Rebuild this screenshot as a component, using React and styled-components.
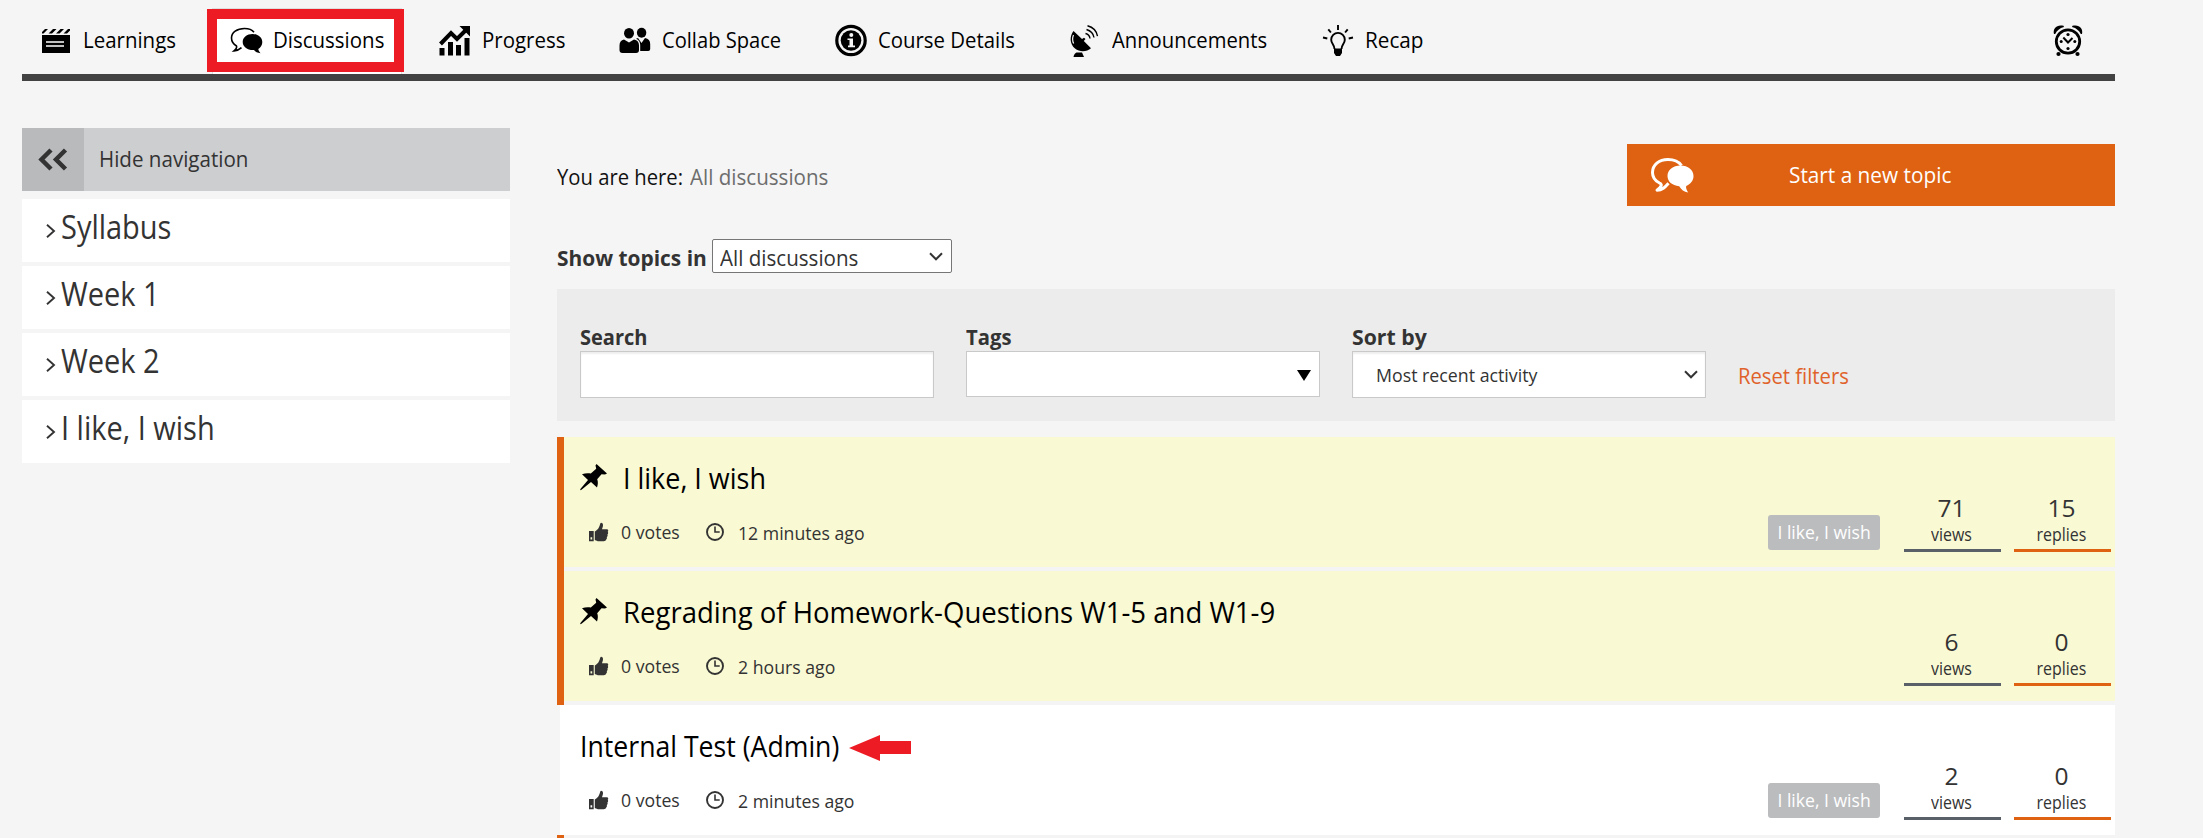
import React from "react";
import styled, { createGlobalStyle, css } from "styled-components";

const GlobalStyle = createGlobalStyle`
  *, *::before, *::after { box-sizing: border-box; }
  html, body { margin: 0; height: 838px; overflow: hidden; background: #f5f5f5; }
  body { font-family: "Open Sans", "Noto Sans", sans-serif; color: #333; }
`;

/* Slightly condensed run of text; $w reserves its drawn width in the line. */
const Narrow = styled.span`
  display: inline-block;
  flex: none;
  width: ${(p) => (p.$w ? `${p.$w}px` : "auto")};
  white-space: nowrap;
  transform: scaleX(${(p) => p.$x || 0.93});
  transform-origin: ${(p) => (p.$center ? "center" : "left")};
`;

const Page = styled.div`
  width: 2093px;
  height: 838px;
  margin-left: 22px;
`;

/* ---------- top bar ---------- */
const TopBar = styled.nav`
  display: grid;
  grid-template-columns: 190px 209px 180px 216px 234px 253px 1fr auto;
  align-items: stretch;
  height: 81px;
  padding: 8px 31px 0 18px;
  border-bottom: 7px solid #424242;
`;

const Tab = styled.a`
  position: relative;
  display: flex;
  gap: 9px;
  color: #000;
`;

const TabIcon = styled.svg`
  position: relative;
  flex: none;
  width: 34px;
  height: 34px;
  margin-top: 16px;
  overflow: visible;
`;

const TabLabel = styled(Narrow)`
  position: relative;
  font-size: 22px;
  line-height: 62px;
`;

const ActiveFill = styled.span`
  position: absolute;
  top: 0;
  left: -18px;
  width: 190px;
  height: 66px;
  background: #fff;
  border: 1px solid #dedede;
  border-bottom: 0;
`;

const Highlight = styled.span`
  position: absolute;
  top: 1px;
  left: -23px;
  width: 197px;
  height: 63px;
  border: 10px solid #ed1c24;
`;

/* ---------- columns ---------- */
const Columns = styled.div`
  display: flex;
  gap: 47px;
`;

const Sidebar = styled.aside`
  width: 488px;
  padding-top: 47px;
`;

const HideNav = styled.div`
  display: flex;
  height: 63px;
  margin-bottom: 8px;
  background: #cdced0;
  font-size: 22px;
  line-height: 61px;
`;

const HideNavIcon = styled.div`
  display: flex;
  align-items: center;
  justify-content: center;
  width: 62px;
  margin-right: 15px;
  background: #b9babc;
`;

const SideItem = styled.a`
  display: flex;
  height: 63px;
  margin-bottom: 4px;
  padding-left: 24px;
  background: #fff;
  color: #333;
  font-size: 32px;
  line-height: 56px;
  svg { margin: 25px 5px 0 0; }
`;

const Main = styled.main`
  width: 1558px;
`;

const Head = styled.div`
  display: flex;
  justify-content: space-between;
  padding-top: 63px;
  height: 158px;
`;

const Crumbs = styled.div`
  font-size: 22px;
  line-height: 65px;
  color: #111;
`;

const Current = styled(Narrow)`
  color: #6d6d6d;
`;

const NewTopic = styled.button`
  display: flex;
  gap: 94px;
  width: 488px;
  height: 62px;
  padding: 0 24px;
  border: 0;
  background: #de6212;
  color: #fff;
  font: 500 22px/60px "Open Sans", sans-serif;
  svg { flex: none; margin-top: 14px; }
`;

const Scope = styled.div`
  display: flex;
  height: 50px;
  font-size: 22px;
  line-height: 37px;
`;

const Strong = styled(Narrow)`
  font-weight: 700;
  font-size: 22px;
`;

const ScopeSelect = styled.div`
  display: flex;
  justify-content: space-between;
  width: 240px;
  height: 34px;
  padding: 0 8px 0 7px;
  border: 1px solid #767676;
  border-radius: 2px;
  background: #fff;
  line-height: 35px;
  svg { margin-top: 12px; }
`;

const Filters = styled.section`
  display: flex;
  height: 132px;
  margin-bottom: 16px;
  padding: 33px 24px 0 23px;
  background: #ececec;
`;

const Field = styled.div`
  display: flex;
  flex-direction: column;
  width: 354px;
  margin-right: 32px;
`;

const FieldLabel = styled(Strong)`
  height: 29px;
  line-height: 29px;
`;

const Control = styled.div`
  display: flex;
  justify-content: space-between;
  height: ${(p) => (p.$inset ? 47 : 46)}px;
  padding: 0 ${(p) => (p.$inset ? 7 : 8)}px 0 23px;
  border: 1px solid #c9c9c9;
  background: #fff;
  font-size: 19px;
  line-height: 46px;
  ${(p) => p.$inset && css`box-shadow: inset 0 2px 2px rgba(0, 0, 0, 0.07);`}
  svg { margin-top: 18px; }
`;

const Reset = styled(Narrow)`
  margin-top: 38px;
  font-size: 22px;
  line-height: 30px;
  color: #e0622a;
`;

/* ---------- topics ---------- */
const Topic = styled.article`
  display: flex;
  justify-content: space-between;
  height: 134px;
  border-bottom: 4px solid #f4f4f4;
  padding-left: ${(p) => (p.$pinned ? 17 : 21)}px;
  margin-left: ${(p) => (p.$pinned ? 7 : 3)}px;
  background: ${(p) => (p.$pinned ? "#f9f9d3" : "#fff")};
`;

const PinnedGroup = styled.div`
  background: linear-gradient(to right, #de6212 7px, #f4f4f4 7px);
`;

const NextEdge = styled.div`
  position: relative;
  width: 7px;
  height: 4px;
  margin-top: -4px;
  background: #de6212;
`;

const TopicTitle = styled.h3`
  display: flex;
  align-items: flex-start;
  height: 83px;
  margin: 0 0 0 -1px;
  color: #000;
  font-size: 28.5px;
  font-weight: 400;
  line-height: 83px;
`;

const PinIcon = styled.svg`
  width: 28px;
  height: 28px;
  margin: 27px 15px 0 0;
`;

const ArrowIcon = styled.svg`
  width: 62px;
  height: 26px;
  margin: 30px 0 0 12px;
`;

const Meta = styled.div`
  display: flex;
  padding-left: 8px;
  font-size: 19px;
  line-height: 24px;
`;

const Ago = styled(Narrow)`
  padding-top: 1px;
`;

const MetaIcon = styled.svg`
  width: 20px;
  height: 20px;
  margin: 2px ${(p) => p.$gap}px 0 0;
`;

const Figures = styled.div`
  display: flex;
  align-items: flex-start;
  margin-right: 4px;
`;

const Tag = styled.span`
  width: 112px;
  height: 35px;
  margin: 78px 24px 0 0;
  border-radius: 3px;
  background: #bbbcbe;
  color: #fff;
  font-size: 18.5px;
  font-weight: 500;
  line-height: 34px;
  text-align: center;
`;

const Stat = styled.div`
  width: 97px;
  height: 58px;
  padding-right: 2px;
  margin: 57px 0 0 ${(p) => (p.$accent ? 13 : 0)}px;
  border-bottom: 3px solid ${(p) => (p.$accent ? "#de6212" : "#596068")};
  font-size: 17.5px;
  line-height: 26px;
  text-align: center;
`;

const Count = styled.div`
  font-size: 24.5px;
  line-height: 27px;
`;

/* ---------- drawings ---------- */
const Icon = ({ children }) => (
  <TabIcon viewBox="0 0 34 34" aria-hidden="true">{children}</TabIcon>
);

const Clapper = () => (
  <Icon>
    <path d="M2 11h28v18H2z" />
    <path d="M2 9.500V8l3-3h3L3.500 9.500zM8.500 9.500 13 5h3.500L12 9.500zM16 9.500 20.500 5H24l-4.500 4.500zM23.500 9.500 28 5h2v1.500l-3 3z" />
    <path d="M6 18h18M6 22h18" stroke="#fff" strokeWidth="1.300" />
  </Icon>
);

const Bubbles = () => (
  <Icon>
    <path d="M24 8.300C22 5.700 18.500 4.500 14.500 4.500 7 4.500 1.500 8.500 1.500 14c0 3.700 2.200 6.300 5 8 .6 1.500-.8 3.500-2.500 4.900 3.200-.2 5.800-1.600 7.500-3.200" fill="none" stroke="#000" strokeWidth="1.600" />
    <path d="M22.500 10c5.500 0 9.800 3.500 9.800 8 0 3-1.600 5.500-4 7 .2 1.700 1.200 3.200 2.200 4.200-3-.2-5.200-1.500-6.500-3.200-6.300.4-11.300-3-11.300-8 0-4.500 4.300-8 9.800-8z" />
  </Icon>
);

const Chart = () => (
  <Icon>
    <path d="M.5 24h5v7.500h-5zM9 18h5v13.500H9zM17 21h5v10.500h-5zM25.500 14h5v17.500h-5z" />
    <path d="M1.500 20 12 9l6 6 9-9" fill="none" stroke="#000" strokeWidth="4" />
    <path d="M20.500 2H31v10.500z" />
  </Icon>
);

const People = () => (
  <Icon>
    <ellipse cx="10" cy="9.300" rx="5" ry="5.300" />
    <ellipse cx="22.600" cy="8.700" rx="4.700" ry="5" />
    <path d="M5 15.500 10 18.500 15 15.500c3.500.5 5 2.500 5 6V26q0 3-3 3H3.500q-3 0-3-3v-4.500c0-3.500 1.500-5.500 4.500-6z" />
    <path d="M17 14.800 19 14l3.500 5L26 14c3.500.8 5.200 2.500 5.200 6v5q0 2-2 2h-8v-6c0-2.800-1.200-5-4.200-6.200z" />
  </Icon>
);

const Info = () => (
  <Icon>
    <circle cx="16" cy="16.500" r="14.200" fill="none" stroke="#000" strokeWidth="3.200" />
    <circle cx="16" cy="16.500" r="10.300" />
    <circle cx="16.300" cy="11" r="2" fill="#f5f5f5" />
    <path d="M12.500 14.500h5.500v7h2v1.700h-7v-1.700h1.500V16h-2z" fill="#f5f5f5" />
  </Icon>
);

const Dish = () => (
  <Icon>
    <path d="M4.500 7C.5 12 .5 20 6 24.500c5 4 12 3.300 16-.3L14.800 17l1.700-2-1.500-1.300-2 1.400z" />
    <path d="M4.500 11c-1.300 3-1.200 6 .2 8.500" fill="none" stroke="#f5f5f5" strokeWidth="1.200" />
    <path d="M7.500 28.500h5.500l2 4.500H4.500c.3-2.200 1.300-3.600 3-4.500z" />
    <path d="M16.500 9.500q4 1 4.500 5M17.500 5.500q6.500 2 7.500 8M18.500 1.800q8.500 2.200 10 10.400" fill="none" stroke="#000" strokeWidth="1.400" />
  </Icon>
);

const Bulb = () => (
  <Icon>
    <path d="M12.500 25c0-4-3.300-5.300-3.300-9.300a6.800 6.800 0 0 1 13.600 0c0 4-3.300 5.300-3.300 9.300" fill="none" stroke="#000" strokeWidth="1.900" />
    <path d="M12 24.500h8v4.500l-2 3h-4l-2-3z" />
    <path d="M16 1v5M6.300 5.300l2.600 3.200M25.700 5.300l-2.600 3.200M1 13.500l4.300 1M31 13.500l-4.300 1" stroke="#000" strokeWidth="1.900" />
  </Icon>
);

const Alarm = () => (
  <Icon>
    <circle cx="18" cy="17.500" r="11.700" fill="none" stroke="#000" strokeWidth="2.800" />
    <path d="M4 10C2.500 4.500 7 0 13.500 1.800L14 3C9.500 4.200 7 6.500 5.200 10zM32 10C33.500 4.500 29 0 22.500 1.800L22 3c4.500 1.200 7 3.500 8.800 7z" />
    <path d="M13.300 13.500 18 18.500l4.500-4.500" fill="none" stroke="#000" strokeWidth="2" />
    <circle cx="18" cy="10.500" r="1.600" /><circle cx="18" cy="24.500" r="1.600" />
    <circle cx="11.200" cy="17.500" r="1.500" /><circle cx="24.800" cy="17.500" r="1.500" />
    <circle cx="8.500" cy="30" r="2.100" /><circle cx="27.500" cy="30" r="2.100" />
  </Icon>
);

const Chevron = () => (
  <svg width="14" height="9" viewBox="0 0 14 9" aria-hidden="true">
    <path d="M1 1.300l6 6 6-6" fill="none" stroke="#333" strokeWidth="2" />
  </svg>
);

const Pin = () => (
  <PinIcon viewBox="0 0 28 28" aria-hidden="true">
    <path d="M16.500 0 27 9.500l-2 1-3.500-.3-4.300 5c1 2.700.8 5.300-.2 8.300L11 18 1.500 25.800 0 26.300l.6-1.500L8 16 2 10.300c3-1.200 6-1.400 8.800-.8l5.400-4.700-.7-3.300z" />
  </PinIcon>
);

const Thumb = () => (
  <MetaIcon $gap={12} viewBox="0 0 20 20" aria-hidden="true">
    <path fill="#333" fillRule="evenodd" d="M0 9h4.700v10.200H0zM1.500 15.200v2.300h1.700v-2.300z" />
    <path fill="#333" d="M5.800 9.500C9.500 7.500 10.500 4.500 11.300 1.500 11.600.3 14 .8 14 3c0 1.700-.6 3-1 4.200h5.200c1.300.3 1.300 2 .5 2.600.8 1 .5 2.200-.3 2.800.5 1 .2 2-.6 2.600.3 1 0 1.900-.7 2.400-.2 1.300-1.100 1.700-2.300 1.700H10c-1.700 0-2.700-1-4.200-1.400z" />
  </MetaIcon>
);

const Clock = () => (
  <MetaIcon $gap={12} viewBox="0 0 20 20" aria-hidden="true">
    <circle cx="9" cy="10" r="8" fill="none" stroke="#333" strokeWidth="1.900" />
    <path d="M9 4.500V10h4.700" fill="none" stroke="#333" strokeWidth="1.600" />
  </MetaIcon>
);

const tabs = [
  { label: "Learnings", icon: Clapper },
  { label: "Discussions", icon: Bubbles, active: true },
  { label: "Progress", icon: Chart },
  { label: "Collab Space", icon: People, x: 0.915 },
  { label: "Course Details", icon: Info, x: 0.925 },
  { label: "Announcements", icon: Dish, x: 0.92 },
  { label: "Recap", icon: Bulb, x: 0.94 },
];

const sections = ["Syllabus", "Week 1", "Week 2", "I like, I wish"];

const topics = [
  { title: "I like, I wish", x: 0.945, pinned: true, time: "12 minutes ago", tag: "I like, I wish", views: 71, replies: 15 },
  { title: "Regrading of Homework-Questions W1-5 and W1-9", x: 0.966, pinned: true, time: "2 hours ago", views: 6, replies: 0 },
  { title: "Internal Test (Admin)", x: 0.935, w: 257, arrow: true, time: "2 minutes ago", tag: "I like, I wish", views: 2, replies: 0 },
];

const TopicRow = ({ t }) => (
  <Topic $pinned={t.pinned}>
    <div>
      <TopicTitle>
        {t.pinned && <Pin />}
        <Narrow $x={t.x} $w={t.w}>{t.title}</Narrow>
        {t.arrow && (
          <ArrowIcon viewBox="0 0 62 26" aria-hidden="true">
            <path d="M0 13 31 0v6h31v13H31v7z" fill="#ed1c24" />
          </ArrowIcon>
        )}
      </TopicTitle>
      <Meta>
        <Thumb />
        <Narrow $w={85}>0 votes</Narrow>
        <Clock />
        <Ago>{t.time}</Ago>
      </Meta>
    </div>
    <Figures>
      {t.tag && <Tag><Narrow $x={0.95} $center>{t.tag}</Narrow></Tag>}
      <Stat>
        <Count>{t.views}</Count>
        <Narrow $x={0.91} $center>views</Narrow>
      </Stat>
      <Stat $accent>
        <Count>{t.replies}</Count>
        <Narrow $x={0.91} $center>replies</Narrow>
      </Stat>
    </Figures>
  </Topic>
);

export default function App() {
  return (
    <Page>
      <GlobalStyle />
      <TopBar>
        {tabs.map(({ label, icon: Glyph, active, x }) => (
          <Tab key={label}>
            {active && <><ActiveFill /><Highlight /></>}
            <Glyph />
            <TabLabel $x={x}>{label}</TabLabel>
          </Tab>
        ))}
        <Tab><Alarm /></Tab>
      </TopBar>
      <Columns>
        <Sidebar>
          <HideNav>
            <HideNavIcon>
              <svg width="30" height="24" viewBox="0 0 30 24" aria-hidden="true">
                <path d="M13 2 3.500 11.500 13 21M27.500 2 18 11.500l9.500 9.500" fill="none" stroke="#333" strokeWidth="4.500" />
              </svg>
            </HideNavIcon>
            <Narrow $x={0.935}>Hide navigation</Narrow>
          </HideNav>
          {sections.map((label) => (
            <SideItem key={label}>
              <svg width="10" height="14" viewBox="0 0 10 14" aria-hidden="true">
                <path d="M1 .7 8 7l-7 6.300" fill="none" stroke="#333" strokeWidth="1.900" />
              </svg>
              <Narrow $x={0.905}>{label}</Narrow>
            </SideItem>
          ))}
        </Sidebar>
        <Main>
          <Head>
            <Crumbs>
              <Narrow $w={133} $x={0.92}>You are here:</Narrow>
              <Current $x={0.935}>All discussions</Current>
            </Crumbs>
            <NewTopic>
              <svg width="44" height="36" viewBox="0 0 44 36" aria-hidden="true">
                <path d="M30.500 7.500C27.500 3.300 22.500 1.500 17 1.500 8 1.500 1.500 7 1.500 14.500c0 5 3 8.500 7 10.500 2.800 1.300 2.600 3.300-2.500 7.200 5.500 0 8-3 11.500-7" fill="none" stroke="#fff" strokeWidth="3" strokeLinejoin="round" />
                <path d="M29.500 7.500c7.500 0 13 4.600 13 10.500 0 4.500-3 8.300-7.300 10-.7 2 .8 4.500 2 6.500-4.300-.5-7-3-9-6.300C21 27.500 16.500 23.500 16.500 18c0-5.900 5.500-10.500 13-10.500z" fill="#fff" />
              </svg>
              <Narrow $x={0.945}>Start a new topic</Narrow>
            </NewTopic>
          </Head>
          <Scope>
            <Strong $w={155} $x={0.95}>Show topics in</Strong>
            <ScopeSelect>
              <Narrow $w={140} $x={0.935}>All discussions</Narrow>
              <Chevron />
            </ScopeSelect>
          </Scope>
          <Filters>
            <Field>
              <FieldLabel $x={0.91}>Search</FieldLabel>
              <Control $inset />
            </Field>
            <Field>
              <FieldLabel $x={0.92}>Tags</FieldLabel>
              <Control>
                <span />
                <svg width="14" height="11" viewBox="0 0 14 11" aria-hidden="true"><path d="M0 0h14L7 11z" /></svg>
              </Control>
            </Field>
            <Field>
              <FieldLabel $x={0.965}>Sort by</FieldLabel>
              <Control $inset>
                <Narrow $x={0.935}>Most recent activity</Narrow>
                <Chevron />
              </Control>
            </Field>
            <Reset $x={0.92}>Reset filters</Reset>
          </Filters>
          <PinnedGroup>
            {topics.filter((t) => t.pinned).map((t) => <TopicRow key={t.title} t={t} />)}
          </PinnedGroup>
          {topics.filter((t) => !t.pinned).map((t) => <TopicRow key={t.title} t={t} />)}
          <NextEdge />
        </Main>
      </Columns>
    </Page>
  );
}
